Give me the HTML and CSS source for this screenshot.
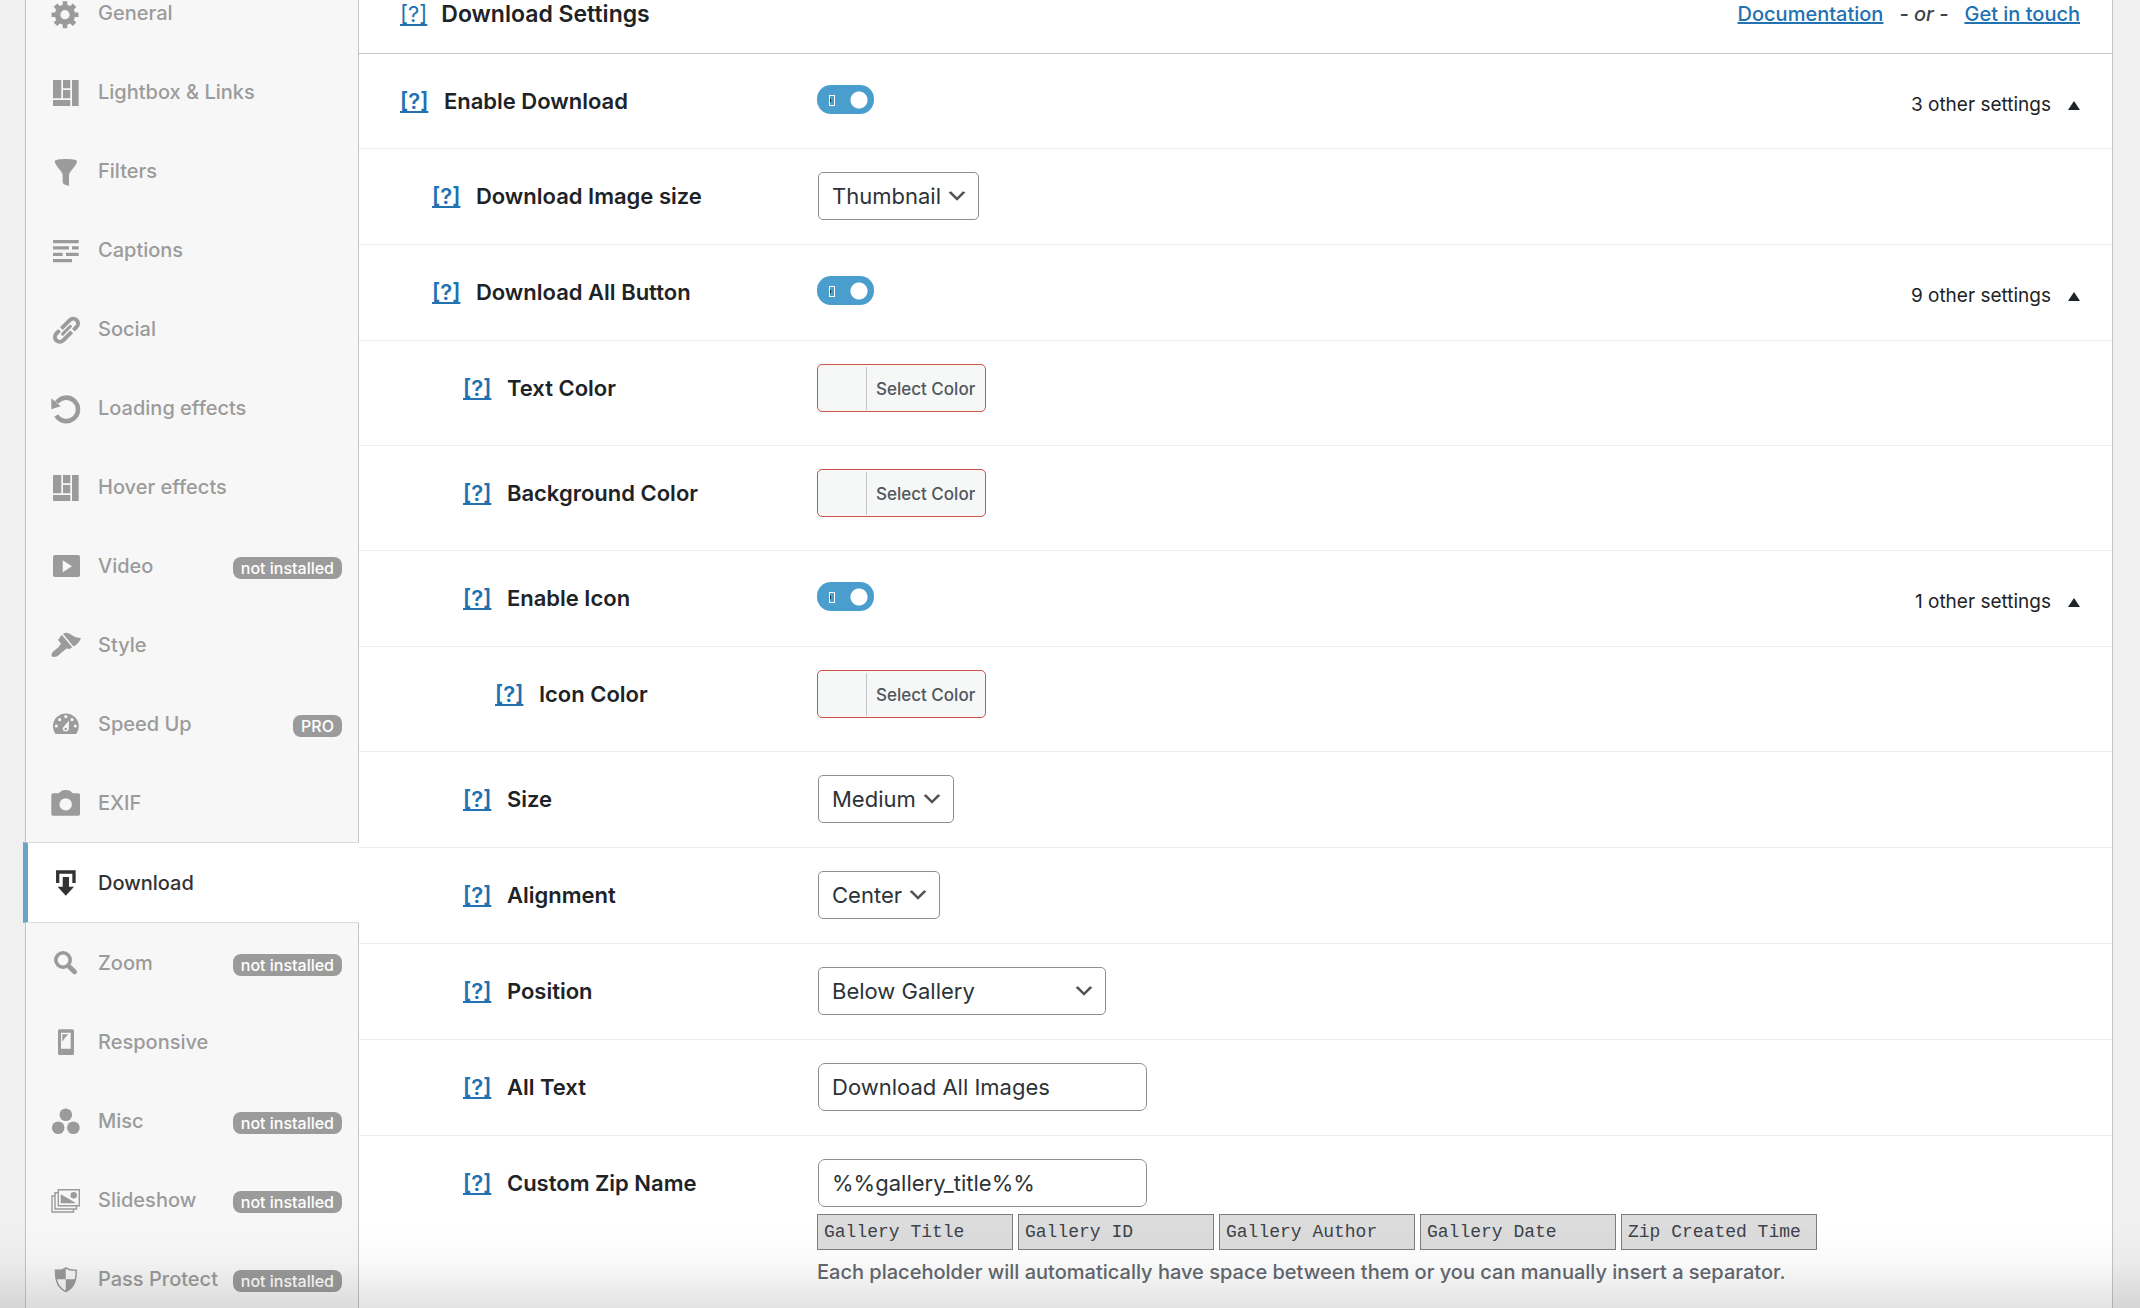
FILE: index.html
```html
<!DOCTYPE html>
<html lang="en">
<head>
    <meta charset="UTF-8">
    <meta name="viewport" content="width=device-width, initial-scale=1.0">
    <title>Download Settings</title>
    <link rel="stylesheet" href="styles.css">
</head>
<body>
    <!-- Layout icon is used by two tabs -->
    <svg class="symbols" width="0" height="0">
        <symbol id="icon-layout" viewBox="0 0 32 32">
            <path d="M3 4h8.3v18.3H3zM13 4h7.3v8.3H13zM13 14h7.3v8.3H13zM3 24h17.3v6H3zM22 4h6.7v26H22z"/>
        </symbol>
    </svg>

    <div class="settings">
        <nav class="tabs">
            <a href="#" class="tab">
                <svg class="icon" viewBox="0 0 32 32"><circle cx="15" cy="17.7" r="7.4" fill="none" stroke="currentColor" stroke-width="5.6"/><path d="M12.7 4.2h4.6v5h-4.6zM12.7 26.2h4.6v5h-4.6zM1.5 15.4h5v4.6h-5zM23.5 15.4h5v4.6h-5z"/><path transform="rotate(45 15 17.7)" d="M12.5 4.2h5v5h-5zM12.5 26.2h5v5h-5zM1.5 15.2h5v5h-5zM23.5 15.2h5v5h-5z"/></svg>
                <span class="tab-name">General</span>
            </a>
            <a href="#" class="tab">
                <svg class="icon"><use href="#icon-layout"/></svg>
                <span class="tab-name">Lightbox &amp; Links</span>
            </a>
            <a href="#" class="tab">
                <svg class="icon" viewBox="0 0 32 32"><path d="M4.7 6.3c0-3 22.3-3 22.3 0 0 4-8 10.500-8 13.500v11c-3-.3-6.300-1.500-6.300-4v-7c0-3-8-9.500-8-13.500z"/></svg>
                <span class="tab-name">Filters</span>
            </a>
            <a href="#" class="tab">
                <svg class="icon" viewBox="0 0 32 32"><path d="M3 6h25.700v3.200H3zM3 12.300h16v3.200H3zM22 12.300h6.700v3.200H22zM3 18.700h9.700v3.200H3zM16 18.700h12.700v3.200H16zM3 25h19v3.200H3z"/></svg>
                <span class="tab-name">Captions</span>
            </a>
            <a href="#" class="tab">
                <svg class="icon" viewBox="0 0 32 32"><g transform="rotate(-45 16.500 17.200)" fill="none" stroke="currentColor" stroke-width="4"><path d="M14 12.400H26a4.800 4.800 0 0 1 0 9.600H21.500"/><path d="M19 22H7a4.800 4.800 0 0 1 0-9.600H11.500"/><path stroke-width="3" stroke-linecap="round" d="M11 17.200h11"/></g></svg>
                <span class="tab-name">Social</span>
            </a>
            <a href="#" class="tab">
                <svg class="icon" viewBox="0 0 32 32"><path fill="none" stroke="currentColor" stroke-width="4.600" d="M6.800 10.500a11.700 11.700 0 1 1-.5 13"/><path d="M1.300 6.300l9.500 8-9.500 3z"/></svg>
                <span class="tab-name">Loading effects</span>
            </a>
            <a href="#" class="tab">
                <svg class="icon"><use href="#icon-layout"/></svg>
                <span class="tab-name">Hover effects</span>
            </a>
            <a href="#" class="tab">
                <svg class="icon" viewBox="0 0 32 32"><path fill-rule="evenodd" d="M5 5h23a2 2 0 0 1 2 2v18a2 2 0 0 1-2 2H5a2 2 0 0 1-2-2V7a2 2 0 0 1 2-2zM12.700 10.300v12l9.300-6z"/></svg>
                <span class="tab-name">Video</span>
                <span class="badge">not installed</span>
            </a>
            <a href="#" class="tab">
                <svg class="icon" viewBox="0 0 32 32"><path d="M13 4.700c3-2.200 6.500-.5 8.500 1.300 3 2 6 3 9.500 3-1.500 4-4 6.500-7.500 8.500z"/><path d="M11.700 5.800L22.300 18.300l-3 1.700-2.800-.5-3 2.500c-1.500 1-3 2.500-4.500 4-2 2-5 2.500-7 1.500-1.200-2 .5-4.500 2.500-6 1.500-1.500 3.500-2.500 4.500-4l2-3-3-3.500z"/></svg>
                <span class="tab-name">Style</span>
            </a>
            <a href="#" class="tab">
                <svg class="icon" viewBox="0 0 32 32"><path d="M5.500 26a12.900 12.900 0 1 1 20.700 0z"/><g class="cut"><circle cx="6.300" cy="18" r="1.600"/><circle cx="9.700" cy="11.700" r="1.600"/><circle cx="15.800" cy="8.700" r="1.600"/><circle cx="22" cy="11.700" r="1.600"/><circle cx="25.300" cy="18" r="1.600"/><path d="M19 12.500l-.3 9a3 3 0 1 1-5.700-2z"/></g><circle cx="15.800" cy="21" r="1.300"/></svg>
                <span class="tab-name">Speed Up</span>
                <span class="badge">PRO</span>
            </a>
            <a href="#" class="tab">
                <svg class="icon" viewBox="0 0 32 32"><path fill-rule="evenodd" d="M3 6.300h5.500L12 3.500q3.800-1 7.500 0l3.500 2.800h5.300q1.700 0 1.700 1.700v19q0 1.700-1.700 1.700H3q-1.700 0-1.700-1.700V8Q1.300 6.300 3 6.300zM9.500 17.400a6.200 6.200 0 1 0 12.400 0a6.200 6.200 0 1 0-12.400 0z"/></svg>
                <span class="tab-name">EXIF</span>
            </a>
            <a href="#" class="tab tab-active">
                <svg class="icon" viewBox="0 0 32 32"><path fill="none" stroke="currentColor" stroke-width="3.300" d="M7.700 16V5H24v11"/><path d="M12.700 10H19v9.700h5l-8.200 9-8.200-9h5.100z"/></svg>
                <span class="tab-name">Download</span>
            </a>
            <a href="#" class="tab">
                <svg class="icon" viewBox="0 0 32 32"><g fill="none" stroke="currentColor"><circle cx="13" cy="13" r="7.200" stroke-width="3.600"/><path stroke-width="5" stroke-linecap="round" d="M19.500 20l5 4.700"/></g></svg>
                <span class="tab-name">Zoom</span>
                <span class="badge">not installed</span>
            </a>
            <a href="#" class="tab">
                <svg class="icon" viewBox="0 0 32 32"><path fill-rule="evenodd" d="M9.500 3.300h13q1.500 0 1.500 1.500v22.700q0 1.500-1.500 1.500h-13q-1.500 0-1.500-1.500V4.800q0-1.500 1.500-1.500zM11 6.700v16h9.700v-16z"/><path d="M12.300 8.300h6l-3.300 3.500-2.700 4z"/></svg>
                <span class="tab-name">Responsive</span>
            </a>
            <a href="#" class="tab">
                <svg class="icon" viewBox="0 0 32 32"><circle cx="15.800" cy="9.700" r="6.300"/><circle cx="8.200" cy="22.700" r="6.300"/><circle cx="23.400" cy="22.700" r="6.300"/></svg>
                <span class="tab-name">Misc</span>
                <span class="badge">not installed</span>
            </a>
            <a href="#" class="tab">
                <svg class="icon" viewBox="0 0 32 32"><g fill="none" stroke="currentColor" stroke-width="1.400"><path d="M8.300 5.700h21v16h-21z"/><path d="M8 8.700H5v16.300h21.500V22"/><path d="M5 12H2v16h21.500v-3"/></g><path d="M10.700 10.300l8 4.500 7.300 4.500H10.700z"/><circle cx="23.700" cy="11.300" r="3.200"/></svg>
                <span class="tab-name">Slideshow</span>
                <span class="badge">not installed</span>
            </a>
            <a href="#" class="tab">
                <svg class="icon" viewBox="0 0 32 32"><path fill="none" stroke="currentColor" stroke-width="1.500" d="M15.800 5c-3 2-6.500 2.500-10.300 2.300C5.300 17 7 25 15.800 28.500 24.700 25 26.400 17 26.200 7.300 22.500 7.500 19 7 15.800 5z"/><path d="M15.800 5v11.300H6.200Q5.300 12 5.500 7.300C9.500 7.500 12.800 7 15.800 5zM15.800 16.300h9.700c-1.200 6-4 10-9.700 12.200z"/></svg>
                <span class="tab-name">Pass Protect</span>
                <span class="badge">not installed</span>
            </a>
        </nav>

        <main class="panel">
            <header class="panel-header">
                <a href="#" class="help">[?]</a>
                <h2>Download Settings</h2>
                <div class="support">
                    <a href="#">Documentation</a>
                    <em>- or -</em>
                    <a href="#">Get in touch</a>
                </div>
            </header>

            <div class="row row-top">
                <div class="row-label">
                    <a href="#" class="help">[?]</a>
                    <label for="enable-download">Enable Download</label>
                </div>
                <div class="row-control">
                    <input type="checkbox" class="toggle" id="enable-download" checked>
                </div>
                <button type="button" class="more">3 other settings <span class="arrow-up"></span></button>
            </div>

            <div class="row">
                <div class="row-label level-1">
                    <a href="#" class="help">[?]</a>
                    <label for="image-size">Download Image size</label>
                </div>
                <div class="row-control">
                    <select id="image-size"><option>Thumbnail</option></select>
                </div>
            </div>

            <div class="row">
                <div class="row-label level-1">
                    <a href="#" class="help">[?]</a>
                    <label for="download-all">Download All Button</label>
                </div>
                <div class="row-control">
                    <input type="checkbox" class="toggle" id="download-all" checked>
                </div>
                <button type="button" class="more">9 other settings <span class="arrow-up"></span></button>
            </div>

            <div class="row row-color">
                <div class="row-label level-2">
                    <a href="#" class="help">[?]</a>
                    <label for="text-color">Text Color</label>
                </div>
                <div class="row-control">
                    <button type="button" class="color-btn" id="text-color"><span class="color-text">Select Color</span></button>
                </div>
            </div>

            <div class="row row-color">
                <div class="row-label level-2">
                    <a href="#" class="help">[?]</a>
                    <label for="bg-color">Background Color</label>
                </div>
                <div class="row-control">
                    <button type="button" class="color-btn" id="bg-color"><span class="color-text">Select Color</span></button>
                </div>
            </div>

            <div class="row">
                <div class="row-label level-2">
                    <a href="#" class="help">[?]</a>
                    <label for="enable-icon">Enable Icon</label>
                </div>
                <div class="row-control">
                    <input type="checkbox" class="toggle" id="enable-icon" checked>
                </div>
                <button type="button" class="more">1 other settings <span class="arrow-up"></span></button>
            </div>

            <div class="row row-color">
                <div class="row-label level-3">
                    <a href="#" class="help">[?]</a>
                    <label for="icon-color">Icon Color</label>
                </div>
                <div class="row-control">
                    <button type="button" class="color-btn" id="icon-color"><span class="color-text">Select Color</span></button>
                </div>
            </div>

            <div class="row">
                <div class="row-label level-2">
                    <a href="#" class="help">[?]</a>
                    <label for="size">Size</label>
                </div>
                <div class="row-control">
                    <select id="size"><option>Medium</option></select>
                </div>
            </div>

            <div class="row">
                <div class="row-label level-2">
                    <a href="#" class="help">[?]</a>
                    <label for="alignment">Alignment</label>
                </div>
                <div class="row-control">
                    <select id="alignment"><option>Center</option></select>
                </div>
            </div>

            <div class="row">
                <div class="row-label level-2">
                    <a href="#" class="help">[?]</a>
                    <label for="position">Position</label>
                </div>
                <div class="row-control">
                    <select id="position" class="select-wide"><option>Below Gallery</option></select>
                </div>
            </div>

            <div class="row">
                <div class="row-label level-2">
                    <a href="#" class="help">[?]</a>
                    <label for="all-text">All Text</label>
                </div>
                <div class="row-control">
                    <input type="text" class="text-input" id="all-text" value="Download All Images">
                </div>
            </div>

            <div class="row">
                <div class="row-label level-2">
                    <a href="#" class="help">[?]</a>
                    <label for="zip-name">Custom Zip Name</label>
                </div>
                <div class="row-control">
                    <input type="text" class="text-input" id="zip-name" value="%%gallery_title%%">
                    <div class="placeholders">
                        <button type="button">Gallery Title</button>
                        <button type="button">Gallery ID</button>
                        <button type="button">Gallery Author</button>
                        <button type="button">Gallery Date</button>
                        <button type="button">Zip Created Time</button>
                    </div>
                    <p class="description">Each placeholder will automatically have space between them or you can manually insert a separator.</p>
                </div>
            </div>
        </main>
    </div>
    <div class="page-fade"></div>
</body>
</html>
```
FILE: styles.css
```css
* {
    box-sizing: border-box;
}
body {
    margin: 0;
    background-color: #f0f0f1;
    color: #1d2327;
    font-family: Inter, "Liberation Sans", sans-serif;
    font-size: 20px;
    height: 100vh;
    overflow: hidden;
}
a {
    color: #2271b1;
}
.symbols {
    position: absolute;
}
.settings {
    display: flex;
    margin: -27px 27px 0 25px; /* Scrolled a little past the top */
    border-left: 1px solid #c3c4c7;
    border-right: 1px solid #c3c4c7;
    background-color: #fff;
}

/* Tabs */
.tabs {
    flex: 0 0 333px;
    background-color: #f7f7f7;
    border-right: 1px solid #c3c4c7;
}
.tab {
    display: flex;
    align-items: center;
    padding: 24px 16px 23px 24px;
    line-height: 32px;
    color: #9b9b9b;
    font-weight: 500;
    text-decoration: none;
}
.tab-active {
    margin: 0 -1px 0 -3px;
    padding-left: 22px;
    background-color: #fff;
    border: solid #dcdcde;
    border-width: 1px 0;
    border-left: 5px solid #6ba5c5;
    color: #333;
}
.icon {
    width: 32px;
    height: 32px;
    margin-right: 16px;
    fill: currentColor;
}
.cut {
    fill: #f7f7f7;
}
.badge {
    margin: 3px 0 0 auto;
    padding: 0 8px;
    border-radius: 8px;
    background-color: #9b9b9b;
    color: #fff;
    font-size: 16px;
    line-height: 22px;
}

/* Panel */
.panel {
    flex: 1;
    min-width: 0;
}
.panel-header {
    display: flex;
    align-items: center;
    height: 81px;
    padding: 2px 32px 0 41px;
    border-bottom: 1px solid #c3c4c7;
}
.panel-header h2 {
    margin: 0;
    font-size: 23px;
    font-weight: 600;
}
.help {
    margin-right: 10px;
    font-size: 22px;
}
.panel-header .help {
    margin-right: 14px;
}
.support {
    display: flex;
    gap: 16px;
    margin-left: auto;
    font-weight: 500;
}
.support em {
    color: #3c434a;
}
.row {
    display: flex;
    align-items: flex-start;
    padding: 23px 32px 24px 41px;
    border-bottom: 1px solid #eee;
}
.row-top {
    padding-bottom: 23px;
}
.row-color {
    padding-bottom: 33px;
}
.row-label {
    flex: 0 0 417px;
    font-size: 22px;
    font-weight: 600;
    line-height: 48px;
}
.level-1 {
    padding-left: 32px;
}
.level-2 {
    padding-left: 63px;
}
.level-3 {
    padding-left: 95px;
}
.row-control {
    flex: 1;
}
.row-control > * {
    display: block;
}
.more {
    display: flex;
    align-items: center;
    padding: 8px 0 0;
    border: 0;
    background: none;
    color: #1d2327;
    font: 19px/40px Inter, "Liberation Sans", sans-serif;
}
.arrow-up {
    margin-left: 17px;
    border: solid transparent;
    border-width: 0 6px 9px;
    border-bottom-color: #1d2327;
}

/* Controls */
.toggle {
    appearance: none;
    width: 57px;
    height: 29px;
    margin: 8px 0 11px;
    border-radius: 14px;
    background: radial-gradient(circle at 42px 15px, #fff 8px, transparent 9px) #4a9ece;
}
.toggle::before {
    content: "";
    display: block;
    width: 4px;
    height: 9px;
    margin: 10px 0 0 12px;
    border: 1px solid #fff;
    background: linear-gradient(#1d2327, #1d2327) no-repeat 0 center / 1px 3px #4a9ece;
}
select,
.text-input {
    height: 48px;
    margin: 0 1px;
    padding: 0 13px;
    border: 1px solid #8c8f94;
    border-radius: 5px;
    background-color: #fff;
    color: #2c3338;
    font: 22px Inter, "Liberation Sans", sans-serif;
}
select {
    appearance: none;
    padding-right: 37px;
    background: url('data:image/svg+xml;utf8,<svg xmlns="http://www.w3.org/2000/svg" viewBox="0 0 20 20"><path d="M5 6l5 5 5-5 2 1-7 7-7-7 2-1z" fill="%23555"/></svg>') no-repeat right 9px center / 24px #fff;
}
.select-wide {
    width: 288px;
}
.text-input {
    width: 329px;
    border-radius: 7px;
}
.color-btn {
    height: 48px;
    padding: 2px 1px 1px 48px;
    border: 1px solid #cf5148;
    border-radius: 5px;
    background-color: #f6f7f7;
}
.color-text {
    display: block;
    padding: 1px 9px 0;
    border-left: 1px solid #c3c4c7;
    color: #50575e;
    font: 500 17px/42px Inter, "Liberation Sans", sans-serif;
}
.placeholders {
    display: flex;
    gap: 5px;
    margin-top: 7px;
}
.placeholders button {
    width: 196px;
    height: 36px;
    padding: 0 6px;
    border: 1px solid #7e7e7e;
    border-radius: 0;
    background-color: #dcdcdc;
    color: #3c434a;
    font: 18px "Liberation Mono", monospace;
    text-align: left;
}
.description {
    margin: 6px 0 0;
    color: #646970;
    font-weight: 500;
    line-height: 32px;
}

/* Shade along the bottom of the window */
.page-fade {
    position: fixed;
    left: 0;
    right: 0;
    bottom: 0;
    height: 84px;
    background: linear-gradient(rgba(0, 0, 0, 0), rgba(0, 0, 0, 0.02) 45%, rgba(0, 0, 0, 0.11));
    pointer-events: none;
}
```
